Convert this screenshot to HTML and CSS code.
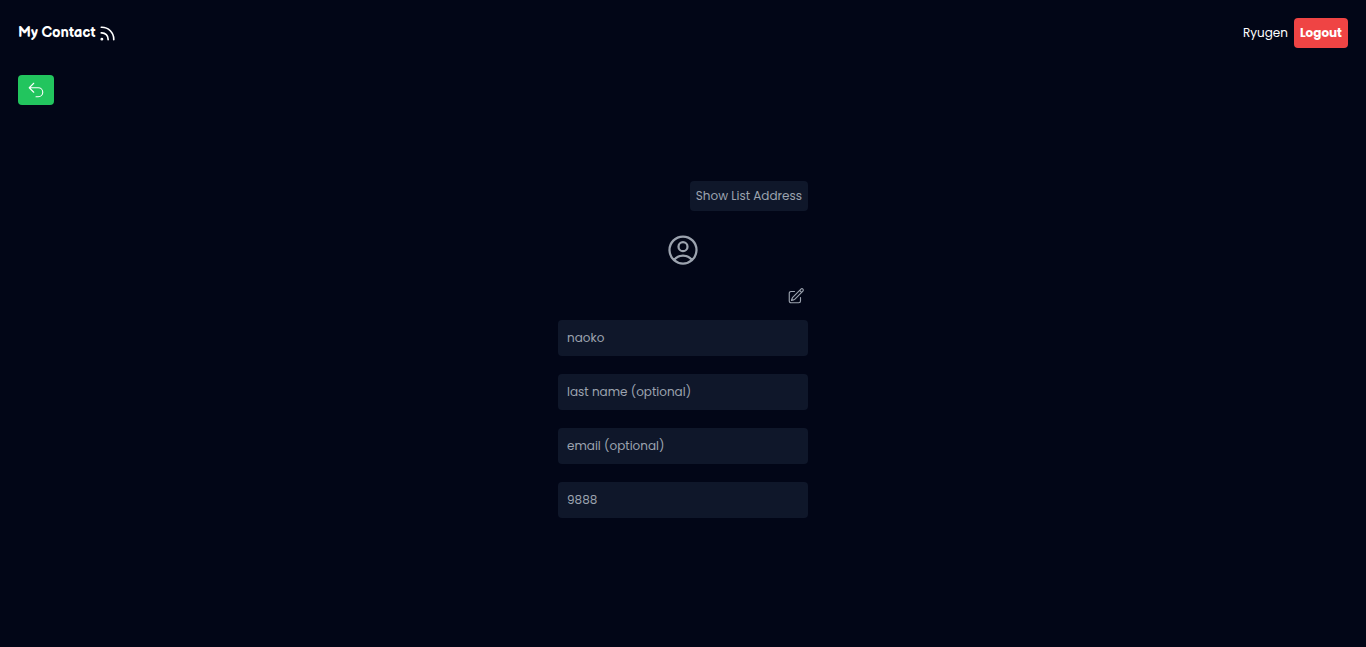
FILE: index.html
```html
<!DOCTYPE html>
<html lang="en">
<head>
<meta charset="utf-8">
<meta name="viewport" content="width=device-width, initial-scale=1">
<title>My Contact</title>
<link rel="stylesheet" href="styles.css">
</head>
<body>
<header class="topbar">
  <h1 class="brand">My Contact
    <svg class="brand-icon" viewBox="3 3 18 18" aria-hidden="true"><path d="M12.750 19.500v-.75a7.500 7.500 0 0 0-7.500-7.500H4.500m0-6.750h.75c7.870 0 14.250 6.380 14.250 14.250v.75M6 18.750a.75.75 0 1 1-1.500 0 .75.75 0 0 1 1.500 0Z"/></svg>
  </h1>
  <div class="account">
    <span class="user">Ryugen</span>
    <button class="btn logout" type="button">Logout</button>
  </div>
</header>
<nav class="back-row">
  <button class="btn back" type="button" aria-label="Back">
    <svg class="icon" viewBox="0 0 24 24" aria-hidden="true"><path d="M9 15 3 9m0 0 6-6M3 9h12a6 6 0 0 1 0 12h-3"/></svg>
  </button>
</nav>
<main class="content">
  <form class="contact">
    <button class="btn addresses" type="button">Show List Address</button>
    <svg class="avatar" viewBox="0 0 24 24" aria-hidden="true"><path d="M17.982 18.725A7.488 7.488 0 0 0 12 15.750a7.488 7.488 0 0 0-5.982 2.975m11.963 0a9 9 0 1 0-11.963 0m11.963 0A8.966 8.966 0 0 1 12 21a8.966 8.966 0 0 1-5.982-2.275M15 9.750a3 3 0 1 1-6 0 3 3 0 0 1 6 0Z"/></svg>
    <button class="edit" type="button" aria-label="Edit contact">
      <svg class="icon" viewBox="0 0 24 24" aria-hidden="true"><path d="m16.862 4.487 1.687-1.688a1.875 1.875 0 1 1 2.652 2.652L10.582 16.070a4.500 4.500 0 0 1-1.897 1.130L6 18l.8-2.685a4.500 4.500 0 0 1 1.130-1.897l8.932-8.931Zm0 0L19.500 7.125M18 14v4.750A2.250 2.250 0 0 1 15.750 21H5.250A2.250 2.250 0 0 1 3 18.750V8.250A2.250 2.250 0 0 1 5.250 6H10"/></svg>
    </button>
    <div class="fields">
      <input class="field" type="text" aria-label="First name" placeholder="naoko">
      <input class="field" type="text" aria-label="Last name" placeholder="last name (optional)">
      <input class="field" type="email" aria-label="Email" placeholder="email (optional)">
      <input class="field" type="tel" aria-label="Phone" placeholder="9888">
    </div>
  </form>
</main>
</body>
</html>
```
FILE: styles.css
```css
* { box-sizing: border-box; }
body {
  margin: 0;
  min-height: 100vh;
  display: flex;
  flex-direction: column;
  background: #020617;
  color: #fff;
  font: 12px/18px Poppins, Inter, sans-serif;
}
svg {
  display: block;
  fill: none;
  stroke: currentColor;
  stroke-width: 1.5;
  stroke-linecap: round;
  stroke-linejoin: round;
}
button, input { font: inherit; border: 0; }
button { cursor: pointer; }
.topbar {
  display: flex;
  justify-content: space-between;
  align-items: center;
  padding: 18px;
}
.brand {
  display: flex;
  align-items: center;
  gap: 4px;
  margin: 0;
  font-family: "Balsamiq Sans", Poppins, sans-serif;
  font-size: 15px;
  line-height: 20px;
  font-weight: 700;
}
.brand-icon { width: 15px; height: 15px; stroke-width: 2; }
.icon { width: 18px; height: 18px; }
.account { display: flex; align-items: center; gap: 6px; }
.btn { padding: 6px; border-radius: 4px; color: #fff; }
.logout { background: #ef4444; font-weight: 700; }
.back-row { padding: 9px 18px; }
.back { padding: 6px 9px; background: #22c55e; }
.content {
  flex: 1;
  display: flex;
  justify-content: center;
  padding: 67px 18px 18px;
}
.contact {
  display: flex;
  flex-direction: column;
  width: 250px;
}
.addresses { align-self: flex-end; background: #0f172a; color: #9ca3af; }
.avatar { align-self: center; width: 36px; height: 36px; margin-top: 21px; color: #9ca3af; }
.edit {
  align-self: flex-end;
  margin-top: 16px;
  padding: 3px;
  background: none;
  color: #9ca3af;
}
.fields { display: grid; gap: 18px; margin-top: 12px; }
.field {
  width: 100%;
  height: 36px;
  padding: 9px;
  border-radius: 4px;
  background: #0f172a;
  color: #9ca3af;
}
.field::placeholder { color: #9ca3af; opacity: 1; }
```
